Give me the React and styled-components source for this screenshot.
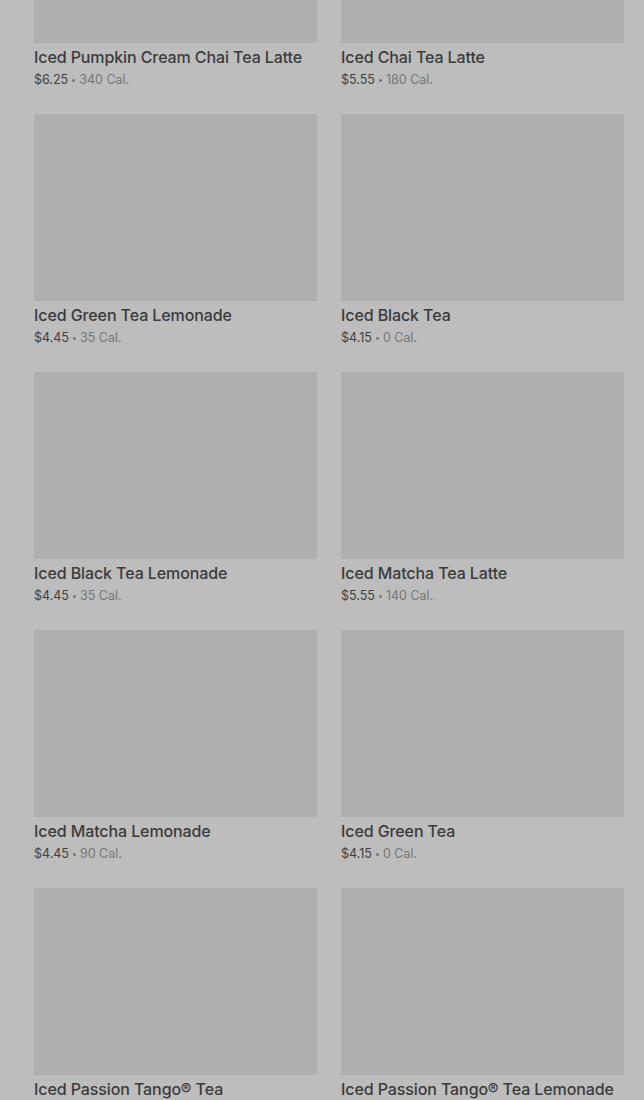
import React from "react";
import styled, { createGlobalStyle } from "styled-components";

const Global = createGlobalStyle`
  html, body { margin: 0; padding: 0; background: #bdbdbd; }
  body { font-family: Inter, "Noto Sans", "Liberation Sans", sans-serif; overflow: hidden; }
`;

const Page = styled.div`
  width: 644px;
  height: 1100px;
  overflow: hidden;
  background: #bdbdbd;
`;

const Grid = styled.div`
  display: grid;
  grid-template-columns: 283px 283px;
  column-gap: 24px;
  row-gap: 24px;
  padding: 0 20px 0 34px;
  margin-top: -144px;
`;

const Card = styled.div`
  display: flex;
  flex-direction: column;
`;

const Thumb = styled.div`
  height: 187px;
  background: #afafaf;
`;

const Title = styled.div`
  margin-top: 3px;
  font-size: 16px;
  line-height: 22px;
  font-weight: 500;
  color: #3b3b3b;
  letter-spacing: -0.1px;
  white-space: nowrap;
`;

const Meta = styled.div`
  display: flex;
  align-items: center;
  gap: 4px;
  height: 22px;
  padding-top: 2px;
  box-sizing: border-box;
  font-size: 12.5px;
  line-height: 20px;
  color: #404040;
`;

const Dot = styled.span`
  display: inline-block;
  width: 3px;
  height: 3px;
  border-radius: 50%;
  background: #767676;
`;

const Cal = styled.span`
  color: #767676;
`;

const items = [
  ["Iced Pumpkin Cream Chai Tea Latte", "$6.25", "340 Cal."],
  ["Iced Chai Tea Latte", "$5.55", "180 Cal."],
  ["Iced Green Tea Lemonade", "$4.45", "35 Cal."],
  ["Iced Black Tea", "$4.15", "0 Cal."],
  ["Iced Black Tea Lemonade", "$4.45", "35 Cal."],
  ["Iced Matcha Tea Latte", "$5.55", "140 Cal."],
  ["Iced Matcha Lemonade", "$4.45", "90 Cal."],
  ["Iced Green Tea", "$4.15", "0 Cal."],
  ["Iced Passion Tango® Tea", "$4.15", "0 Cal."],
  ["Iced Passion Tango® Tea Lemonade", "$4.45", "50 Cal."],
];

export default function App() {
  return (
    <Page>
      <Global />
      <Grid>
        {items.map(([name, price, cal]) => (
          <Card key={name}>
            <Thumb />
            <Title>{name}</Title>
            <Meta>
              <span>{price}</span>
              <Dot />
              <Cal>{cal}</Cal>
            </Meta>
          </Card>
        ))}
      </Grid>
    </Page>
  );
}
